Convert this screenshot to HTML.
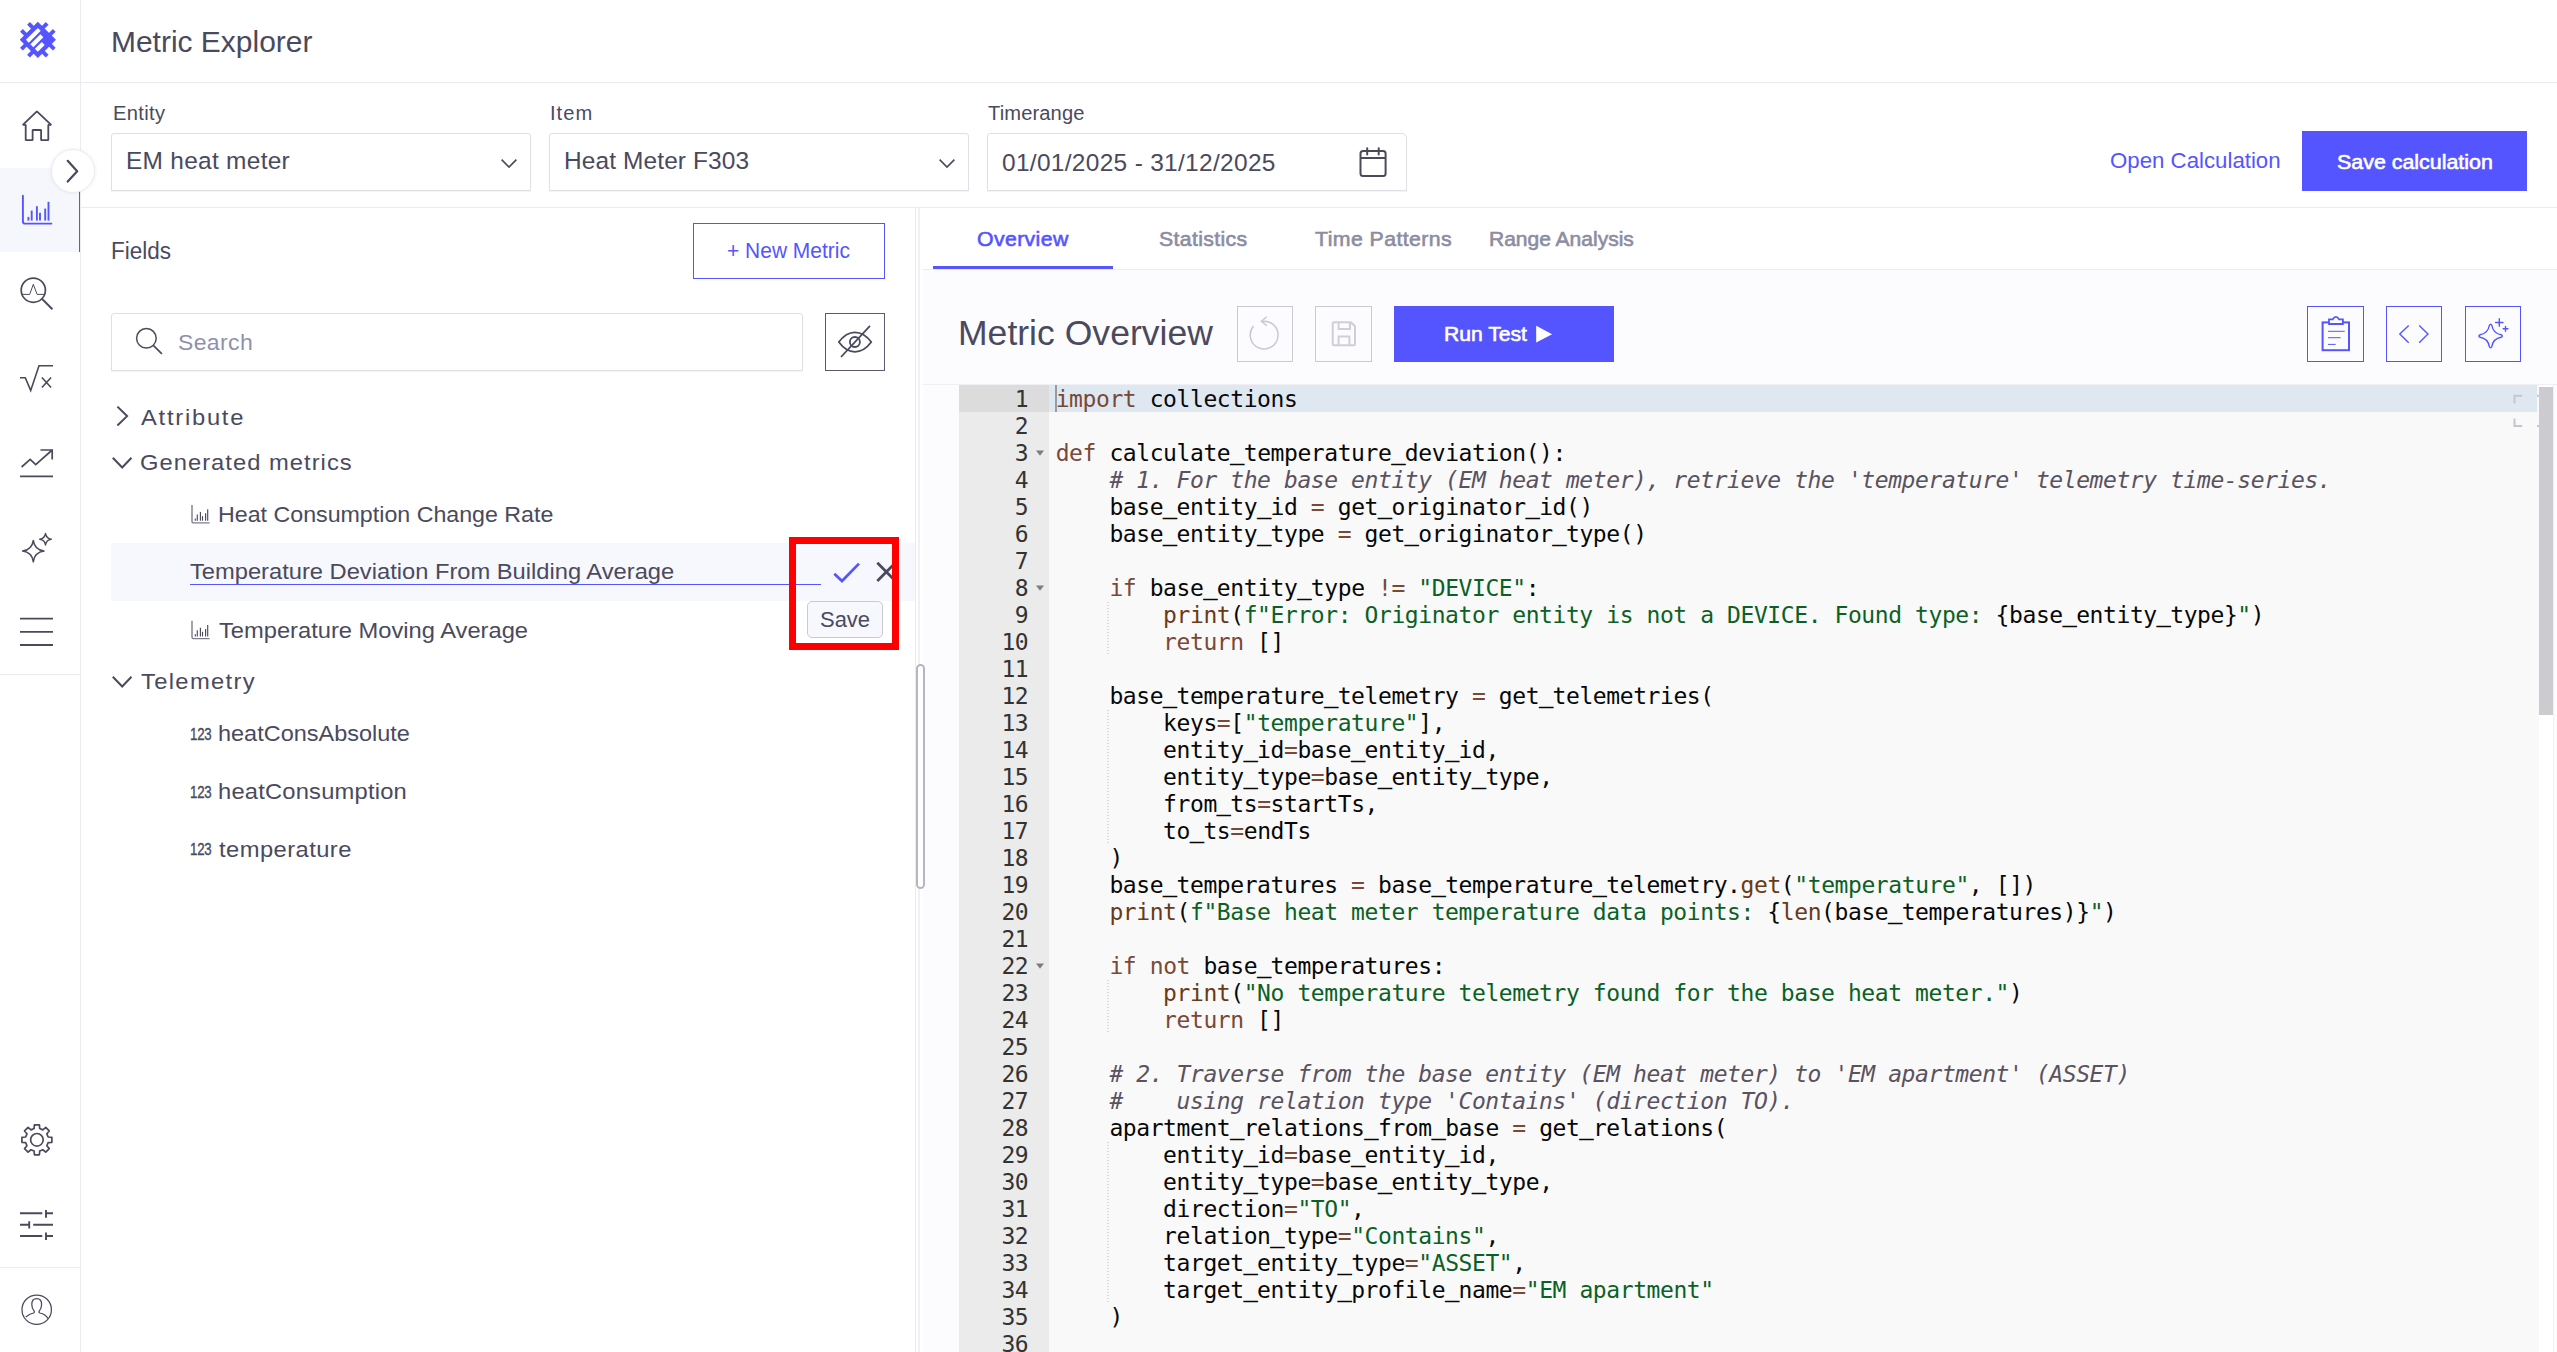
<!DOCTYPE html>
<html lang="en"><head><meta charset="utf-8"><title>Metric Explorer</title>
<style>
html,body{margin:0;padding:0;background:#fff;}
body{width:2557px;height:1352px;overflow:hidden;position:relative;font-family:"Liberation Sans",sans-serif;color:#4a4a5e;}
.t{position:absolute;white-space:nowrap;transform-origin:0 0;font-family:"Liberation Sans",sans-serif;}
.b{position:absolute;box-sizing:border-box;}
svg.ov{position:absolute;left:0;top:0;width:2557px;height:1352px;overflow:visible;}
.code{position:absolute;left:0;top:0;font-family:"DejaVu Sans Mono","Liberation Mono",monospace;font-size:23px;letter-spacing:-0.42px;white-space:pre;color:#080808;}
.ln{position:absolute;left:1055.7px;height:27px;line-height:27px;}
.gn{position:absolute;left:959px;width:69.3px;height:27px;line-height:27px;text-align:right;color:#333;}
.u{position:relative;top:-1.6px;-webkit-text-stroke:0.75px}
.k{color:#794938}.s{color:#0b6125}.c{color:#5a525f;font-style:italic}.f{color:#693a17}
</style></head><body>

<!-- structure lines -->
<div class="b" style="left:0;top:82px;width:2557px;height:1px;background:#ececf0"></div>
<div class="b" style="left:80px;top:0;width:1px;height:1352px;background:#ececf0"></div>
<div class="b" style="left:81px;top:207px;width:2476px;height:1px;background:#ececf0"></div>
<div class="b" style="left:0;top:674px;width:80px;height:1px;background:#ececf0"></div>
<div class="b" style="left:0;top:1267px;width:80px;height:1px;background:#ececf0"></div>
<!-- nav active -->
<div class="b" style="left:0;top:168px;width:79px;height:83.5px;background:#f6f6fd"></div>
<div class="b" style="left:78.6px;top:168px;width:1.5px;height:83.5px;background:#5555ff"></div>
<!-- toggle circle -->
<div class="b" style="left:50.6px;top:149.2px;width:44px;height:44px;border-radius:50%;background:#fff;border:1px solid #ececf0;box-shadow:0 0 4px rgba(0,0,0,0.07)"></div>
<!-- selects -->
<div class="b" style="left:111px;top:133px;width:420px;height:57.5px;border:1px solid #dfdfe6;border-radius:3px 3px 0 0;box-shadow:0 1px 1px rgba(0,0,0,0.05)"></div>
<div class="b" style="left:549px;top:133px;width:420px;height:57.5px;border:1px solid #dfdfe6;border-radius:3px 3px 0 0;box-shadow:0 1px 1px rgba(0,0,0,0.05)"></div>
<div class="b" style="left:987px;top:133px;width:420px;height:57.5px;border:1px solid #dfdfe6;border-radius:3px 5px 0 0;box-shadow:0 1px 1px rgba(0,0,0,0.05)"></div>
<!-- save calc -->
<div class="b" style="left:2302px;top:131px;width:225px;height:60px;background:#5555ff"></div>
<!-- new metric -->
<div class="b" style="left:693px;top:223px;width:191.5px;height:55.5px;border:1px solid #5555ff"></div>
<!-- search -->
<div class="b" style="left:111px;top:313px;width:692px;height:58px;border:1px solid #dfdfe6;border-radius:3px 3px 0 0;box-shadow:0 1px 1px rgba(0,0,0,0.05)"></div>
<div class="b" style="left:825px;top:313px;width:60px;height:58px;border:1px solid #5a5a70"></div>
<!-- selected row -->
<div class="b" style="left:111px;top:543px;width:804px;height:57.6px;background:#f7f7fe"></div>
<div class="b" style="left:190px;top:584px;width:631px;height:1px;background:#5555ff"></div>
<!-- save tooltip -->
<div class="b" style="left:807px;top:601px;width:76px;height:37px;border:1px solid #c9c9d2;border-radius:5px;background:#f7f7fe"></div>
<!-- panel dividers -->
<div class="b" style="left:915px;top:208px;width:1px;height:1144px;background:#ececf0"></div>
<div class="b" style="left:918px;top:208px;width:2px;height:1144px;background:#f1f1f5"></div>
<div class="b" style="left:915.8px;top:664px;width:9.4px;height:225px;border:2.3px solid #b6b6c3;border-radius:5px;background:#fff;z-index:3"></div>
<!-- right panel -->
<div class="b" style="left:923px;top:270px;width:1634px;height:1082px;background:#fcfcfe"></div>
<div class="b" style="left:923px;top:269px;width:1634px;height:1px;background:#ececf0"></div>
<div class="b" style="left:933px;top:266px;width:180px;height:3px;background:#5555ff"></div>
<div class="b" style="left:923px;top:384px;width:1634px;height:1px;background:#f0f0f4"></div>
<!-- buttons -->
<div class="b" style="left:1237px;top:306px;width:56px;height:56px;border:1px solid #c9c9d2"></div>
<div class="b" style="left:1315px;top:306px;width:57px;height:56px;border:1px solid #c9c9d2"></div>
<div class="b" style="left:1394px;top:306px;width:220px;height:56px;background:#5555ff"></div>
<div class="b" style="left:2307px;top:306px;width:57px;height:56px;border:1px solid #5555ff"></div>
<div class="b" style="left:2386px;top:306px;width:56px;height:56px;border:1px solid #5555ff"></div>
<div class="b" style="left:2465px;top:306px;width:56px;height:56px;border:1px solid #5555ff"></div>
<!-- editor -->
<div class="b" style="left:959px;top:385px;width:1594px;height:967px;background:#f9f9f9"></div>
<div class="b" style="left:959px;top:385px;width:90px;height:967px;background:#ebebeb"></div>
<div class="b" style="left:959px;top:385px;width:90px;height:27px;background:#dcdcdc"></div>
<div class="b" style="left:1049px;top:385px;width:1488px;height:27px;background:#dfe7f1"></div>
<div class="b" style="left:1055px;top:385px;width:2px;height:27px;background:#9a9aa2"></div>
<div class="b" style="left:2539px;top:385px;width:14px;height:967px;background:#fff"></div>
<div class="b" style="left:2539px;top:386.5px;width:14px;height:328.3px;background:#cbcbd0"></div>
<div class="b" style="left:2553px;top:385px;width:1px;height:967px;background:#f1f1f4"></div>
<!-- red box -->
<div class="b" style="left:789px;top:537px;width:110.4px;height:113px;border:7px solid #ff0000;z-index:5"></div>
<svg class="ov" viewBox="0 0 2557 1352" fill="none" stroke-linecap="butt" stroke-linejoin="miter">
<g transform="translate(37.85,39.8) rotate(-45)" fill="#5555ff" stroke="none">
<rect x="-12.8" y="-12.8" width="25.6" height="25.6"/>
<rect x="-18.2" y="3.06" width="36.4" height="3.92"/>
<rect x="3.06" y="-18.2" width="3.92" height="36.4"/>
<rect x="-18.2" y="-6.98" width="36.4" height="3.92"/>
<rect x="-6.98" y="-18.2" width="3.92" height="36.4"/>
<rect x="-8.5" y="-8.46" width="16.9" height="4.19" fill="#fff"/>
<rect x="-8.5" y="-2.06" width="14.15" height="4.19" fill="#fff"/>
<rect x="-8.5" y="4.27" width="9.75" height="4.19" fill="#fff"/>
</g>
<path d="M32.6,140.2 H25.7 V124.8 H22.8 L36.9,111.4 L51.2,124.8 H48.3 V140.2 H41.1 V130 H32.6 Z" stroke="#4a4a5c" stroke-width="1.8" stroke-linejoin="bevel"/>
<path d="M67.7,160.8 L77.2,171.2 L67.7,181.6" stroke="#4a4a5c" stroke-width="2.2" stroke-linecap="round" stroke-linejoin="round"/>
<path d="M22.9,195.7 V221.4 Q22.9,223.6 25.1,223.6 H51.4" stroke="#5555ff" stroke-width="1.9" stroke-linecap="round"/>
<path d="M28.4,216.9 V220.6" stroke="#5555ff" stroke-width="1.9"/>
<path d="M31.7,210.6 V220.6" stroke="#5555ff" stroke-width="1.9"/>
<path d="M36.9,206.2 V220.6" stroke="#5555ff" stroke-width="1.9"/>
<path d="M40.0,212.7 V220.6" stroke="#5555ff" stroke-width="1.9"/>
<path d="M45.2,208.6 V220.6" stroke="#5555ff" stroke-width="1.9"/>
<path d="M48.5,201.8 V220.6" stroke="#5555ff" stroke-width="1.9"/>
<circle cx="33.3" cy="290.2" r="12.1" stroke="#4a4a5c" stroke-width="1.7"/>
<path d="M41.8,298.6 L52.4,309.3" stroke="#4a4a5c" stroke-width="2"/>
<path d="M21.8,294.4 H29.7 L33.3,284.3 L37.1,294.4 H44.8" stroke="#4a4a5c" stroke-width="1"/>
<path d="M20,377.8 H25.3 L30.7,390.4 L39,365.8 H53" stroke="#4a4a5c" stroke-width="1.6"/>
<path d="M41.9,377.5 L51.1,387.5 M51.1,377.5 L41.9,387.5" stroke="#4a4a5c" stroke-width="1.6"/>
<path d="M21.6,467 L30.2,459.3 L35.7,464.7 L52.2,450 M40.5,450 H52.2 V459.5 M20,476.3 H53" stroke="#4a4a5c" stroke-width="1.7"/>
<path d="M33.3,540.4 Q34.583999999999996,549.816 44.0,551.1 Q34.583999999999996,552.384 33.3,561.8000000000001 Q32.016,552.384 22.599999999999998,551.1 Q32.016,549.816 33.3,540.4 Z" stroke="#4a4a5c" stroke-width="1.5" stroke-linejoin="round"/>
<path d="M45.5,533.4000000000001 Q46.196,538.504 51.3,539.2 Q46.196,539.8960000000001 45.5,545.0 Q44.804,539.8960000000001 39.7,539.2 Q44.804,538.504 45.5,533.4000000000001 Z" stroke="#4a4a5c" stroke-width="1.4" stroke-linejoin="round"/>
<path d="M20,618.7 H53 M20,631.8 H53 M20,645 H53" stroke="#4a4a5c" stroke-width="1.8"/>
<path d="M34.10,1128.54 L34.40,1124.81 L39.40,1124.81 L39.70,1128.54 L42.88,1129.86 L45.74,1127.43 L49.27,1130.96 L46.84,1133.82 L48.16,1137.00 L51.89,1137.30 L51.89,1142.30 L48.16,1142.60 L46.84,1145.78 L49.27,1148.64 L45.74,1152.17 L42.88,1149.74 L39.70,1151.06 L39.40,1154.79 L34.40,1154.79 L34.10,1151.06 L30.92,1149.74 L28.06,1152.17 L24.53,1148.64 L26.96,1145.78 L25.64,1142.60 L21.91,1142.30 L21.91,1137.30 L25.64,1137.00 L26.96,1133.82 L24.53,1130.96 L28.06,1127.43 L30.92,1129.86 Z" stroke="#4a4a5c" stroke-width="1.7" stroke-linejoin="round"/>
<circle cx="36.9" cy="1139.8" r="6.3" stroke="#4a4a5c" stroke-width="1.7"/>
<path d="M20,1213.3 H42.3 M46,1209.9 V1217.7 M46,1213.3 H53 M20,1224.7 H29.2 M29.2,1221.2 V1228.5 M33.2,1224.7 H53 M20,1236 H42.3 M46,1232.4 V1240 M46,1236 H53" stroke="#4a4a5c" stroke-width="1.9"/>
<circle cx="36.7" cy="1309.7" r="14.7" stroke="#4a4a5c" stroke-width="1.25"/>
<path d="M25.8,1317 Q30,1313.6 33.6,1313 Q35,1312.4 34,1310.8 Q31.8,1308 31.8,1304.4 Q31.8,1298.6 36.7,1298.6 Q41.6,1298.6 41.6,1304.4 Q41.6,1308 39.4,1310.8 Q38.4,1312.4 39.8,1313 Q45.6,1314.2 48,1318.6" stroke="#4a4a5c" stroke-width="1.25"/>
<path d="M501.6,159.6 L509,167 L516.4,159.6" stroke="#4a4a5c" stroke-width="1.6"/>
<path d="M939.6,159.6 L947,167 L954.4,159.6" stroke="#4a4a5c" stroke-width="1.6"/>
<rect x="1360.5" y="151.1" width="25.1" height="24.8" rx="2.5" stroke="#4a4a5c" stroke-width="2"/>
<path d="M1360.5,158 H1385.6" stroke="#4a4a5c" stroke-width="2"/>
<path d="M1367.2,148.2 V154.4 M1378.7,148.2 V154.4" stroke="#4a4a5c" stroke-width="2" stroke-linecap="round"/>
<circle cx="146.4" cy="338.3" r="9.8" stroke="#4a4a5c" stroke-width="1.5"/>
<path d="M153.5,345.6 L161.9,353.8" stroke="#4a4a5c" stroke-width="1.7"/>
<path d="M838.8,342 Q846,332.3 854.9,332.3 Q864,332.3 871.3,342 Q864,351.8 854.9,351.8 Q846,351.8 838.8,342 Z" stroke="#4a4a5c" stroke-width="1.8" stroke-linejoin="round"/>
<circle cx="854.9" cy="342" r="5" stroke="#4a4a5c" stroke-width="1.8"/>
<path d="M841,357 L870,325.8" stroke="#4a4a5c" stroke-width="1.8"/>
<path d="M117.4,406.6 L127.1,416.1 L117.4,425.5" stroke="#4a4a5c" stroke-width="2"/>
<path d="M112.8,457.7 L122.2,467.5 L131.5,457.7" stroke="#4a4a5c" stroke-width="2"/>
<path d="M112.8,676.7 L122.2,686.5 L131.5,676.7" stroke="#4a4a5c" stroke-width="2"/>
<path d="M192,505.1 V521.4 Q192,522.9 193.5,522.9 H209.6" stroke="#7c7c8e" stroke-width="1.4"/>
<path d="M195.3,518.5 V520.7" stroke="#4a4a5c" stroke-width="1.15"/>
<path d="M197.3,514.5 V520.7" stroke="#4a4a5c" stroke-width="1.15"/>
<path d="M200.4,512.1 V520.7" stroke="#4a4a5c" stroke-width="1.15"/>
<path d="M202.5,516.1 V520.7" stroke="#4a4a5c" stroke-width="1.15"/>
<path d="M205.6,513.3 V520.7" stroke="#4a4a5c" stroke-width="1.15"/>
<path d="M207.7,509.3 V520.7" stroke="#4a4a5c" stroke-width="1.15"/>
<path d="M192,620.8000000000001 V637.1 Q192,638.6 193.5,638.6 H209.6" stroke="#7c7c8e" stroke-width="1.4"/>
<path d="M195.3,634.2 V636.4000000000001" stroke="#4a4a5c" stroke-width="1.15"/>
<path d="M197.3,630.2 V636.4000000000001" stroke="#4a4a5c" stroke-width="1.15"/>
<path d="M200.4,627.8000000000001 V636.4000000000001" stroke="#4a4a5c" stroke-width="1.15"/>
<path d="M202.5,631.8000000000001 V636.4000000000001" stroke="#4a4a5c" stroke-width="1.15"/>
<path d="M205.6,629.0 V636.4000000000001" stroke="#4a4a5c" stroke-width="1.15"/>
<path d="M207.7,625.0 V636.4000000000001" stroke="#4a4a5c" stroke-width="1.15"/>
<path d="M1261.6,321.4 A13.9,13.9 0 1 1 1253.6,326" stroke="#c9c9d2" stroke-width="1.5"/>
<path d="M1266.8,316.7 L1261.4,321.3 L1266.8,325.7" stroke="#c9c9d2" stroke-width="1.5"/>
<path d="M1334,322.2 H1351 L1355,326.2 V344 Q1355,345.3 1353.7,345.3 H1334 Q1332.7,345.3 1332.7,344 V323.5 Q1332.7,322.2 1334,322.2 Z" stroke="#cfcfd8" stroke-width="2"/>
<path d="M1338.6,322.2 V329 H1350 V322.2 M1338.6,345.3 V336.6 H1349.4 V345.3" stroke="#cfcfd8" stroke-width="2"/>
<path d="M1536.2,325.8 L1552.1,334.2 L1536.2,342.6 Z" fill="#fff" stroke="none"/>
<rect x="2322.6" y="322.4" width="26.4" height="27.8" stroke="#5555ff" stroke-width="2"/>
<path d="M2329,324 V319.4 H2332.6 Q2335.9,314.4 2339.2,319.4 H2342.9 V324 Z" stroke="#5555ff" stroke-width="1.8" fill="#fcfcfe"/>
<path d="M2328,331.3 H2344.7 M2328,337.7 H2340.7 M2328,344.4 H2335.7" stroke="#5555ff" stroke-width="1"/>
<path d="M2408.7,325.5 L2399.8,333.9 L2408.7,342.7 M2419.2,325.5 L2428,333.9 L2419.2,342.7" stroke="#5555ff" stroke-width="1.4"/>
<path d="M2489.2999999999997,325.5 Q2490.6,322.9 2491.9,325.5 Q2493.196,333.404 2501.1,334.7 Q2503.7000000000003,336 2501.1,337.3 Q2493.196,338.596 2491.9,346.5 Q2490.6,349.1 2489.2999999999997,346.5 Q2488.004,338.596 2480.1,337.3 Q2477.4999999999995,336 2480.1,334.7 Q2488.004,333.404 2489.2999999999997,325.5 Z" stroke="#5555ff" stroke-width="1.4" stroke-linejoin="round"/>
<path d="M2499.3,318.8 V326.2 M2495.6,322.5 H2503 M2505.5,326.4 V331.2 M2503.1,328.8 H2507.9" stroke="#5555ff" stroke-width="1.4" stroke-linecap="round"/>
<path d="M1036,450.6 H1044 L1040,455.8 Z" fill="#7d7d7d" stroke="none"/>
<path d="M1036,585.6 H1044 L1040,590.8 Z" fill="#7d7d7d" stroke="none"/>
<path d="M1036,963.6 H1044 L1040,968.8 Z" fill="#7d7d7d" stroke="none"/>
<path d="M2514.5,403.4 V395.8 H2522.2 M2514.5,418.5 V426 H2522.2 M2537,395.8 H2539 M2537,426 H2539" stroke="#c6c6ce" stroke-width="2"/>
<path d="M834.3,573.7 L842,581 L859,563.6" stroke="#5555ff" stroke-width="2.7"/>
<path d="M877.3,562.7 L895.4,581 M877.3,581 L895.4,562.7" stroke="#4a4a5c" stroke-width="2.7"/>
</svg><span class="t" id="t_title" style="left:111.26px;top:26.00px;font-size:29.06px;line-height:32px;font-weight:400;color:#4a4a5e;letter-spacing:0.000px;transform:scaleX(1.0312);">Metric Explorer</span>
<span class="t" id="t_entity" style="left:112.73px;top:102.00px;font-size:19.38px;line-height:22px;font-weight:400;color:#4a4a5e;letter-spacing:0.340px;transform:scaleX(1.0400);">Entity</span>
<span class="t" id="t_item" style="left:550.13px;top:102.00px;font-size:19.38px;line-height:22px;font-weight:400;color:#4a4a5e;letter-spacing:0.968px;transform:scaleX(1.0400);">Item</span>
<span class="t" id="t_tr" style="left:988.29px;top:102.00px;font-size:19.38px;line-height:22px;font-weight:400;color:#4a4a5e;letter-spacing:0.113px;transform:scaleX(1.0400);">Timerange</span>
<span class="t" id="t_em" style="left:126.29px;top:148.00px;font-size:23.53px;line-height:26px;font-weight:400;color:#4a4a5e;letter-spacing:0.268px;transform:scaleX(1.0400);">EM heat meter</span>
<span class="t" id="t_hm" style="left:564.49px;top:148.00px;font-size:23.53px;line-height:26px;font-weight:400;color:#4a4a5e;letter-spacing:0.109px;transform:scaleX(1.0400);">Heat Meter F303</span>
<span class="t" id="t_date" style="left:1002.24px;top:150.00px;font-size:23.53px;line-height:26px;font-weight:400;color:#4a4a5e;letter-spacing:0.300px;transform:scaleX(1.0400);">01/01/2025 - 31/12/2025</span>
<span class="t" id="t_open" style="left:2109.86px;top:147.00px;font-size:22.84px;line-height:26px;font-weight:400;color:#5555ff;letter-spacing:0.000px;transform:scaleX(0.9742);">Open Calculation</span>
<span class="t" id="t_savec" style="left:2336.83px;top:150.00px;font-size:20.66px;line-height:23px;font-weight:400;color:#fff;letter-spacing:0.000px;transform:scaleX(1.0360);-webkit-text-stroke:0.6px;">Save calculation</span>
<span class="t" id="t_fields" style="left:111.24px;top:238.00px;font-size:23.15px;line-height:26px;font-weight:400;color:#4a4a5e;letter-spacing:0.000px;transform:scaleX(0.9726);">Fields</span>
<span class="t" id="t_newm" style="left:726.72px;top:239.00px;font-size:21.49px;line-height:24px;font-weight:400;color:#5555ff;letter-spacing:0.000px;transform:scaleX(0.9764);">+ New Metric</span>
<span class="t" id="t_search" style="left:177.68px;top:330.00px;font-size:22.11px;line-height:25px;font-weight:400;color:#9090ae;letter-spacing:0.356px;transform:scaleX(1.0400);">Search</span>
<span class="t" id="t_attr" style="left:141.40px;top:404.00px;font-size:22.84px;line-height:26px;font-weight:400;color:#4a4a5e;letter-spacing:1.683px;transform:scaleX(1.0400);">Attribute</span>
<span class="t" id="t_gen" style="left:140.49px;top:449.00px;font-size:22.84px;line-height:26px;font-weight:400;color:#4a4a5e;letter-spacing:0.984px;transform:scaleX(1.0400);">Generated metrics</span>
<span class="t" id="t_hccr" style="left:218.09px;top:501.00px;font-size:22.84px;line-height:26px;font-weight:400;color:#4a4a5e;letter-spacing:0.000px;transform:scaleX(1.0165);">Heat Consumption Change Rate</span>
<span class="t" id="t_tdfb" style="left:189.83px;top:558.00px;font-size:22.84px;line-height:26px;font-weight:400;color:#4a4a5e;letter-spacing:0.000px;transform:scaleX(1.0378);">Temperature Deviation From Building Average</span>
<span class="t" id="t_tma" style="left:218.93px;top:617.00px;font-size:22.84px;line-height:26px;font-weight:400;color:#4a4a5e;letter-spacing:0.000px;transform:scaleX(1.0376);">Temperature Moving Average</span>
<span class="t" id="t_tel" style="left:140.83px;top:668.00px;font-size:22.84px;line-height:26px;font-weight:400;color:#4a4a5e;letter-spacing:1.287px;transform:scaleX(1.0400);">Telemetry</span>
<span class="t" id="t_hca" style="left:218.43px;top:720.00px;font-size:22.84px;line-height:26px;font-weight:400;color:#4a4a5e;letter-spacing:-0.000px;transform:scaleX(1.0287);">heatConsAbsolute</span>
<span class="t" id="t_hc" style="left:218.42px;top:778.00px;font-size:22.84px;line-height:26px;font-weight:400;color:#4a4a5e;letter-spacing:0.187px;transform:scaleX(1.0400);">heatConsumption</span>
<span class="t" id="t_temp" style="left:218.90px;top:836.00px;font-size:22.84px;line-height:26px;font-weight:400;color:#4a4a5e;letter-spacing:0.422px;transform:scaleX(1.0400);">temperature</span>
<span class="t" id="t_save" style="left:820.21px;top:607.00px;font-size:22.32px;line-height:25px;font-weight:400;color:#4a4a5e;letter-spacing:0.000px;transform:scaleX(0.9843);">Save</span>
<span class="t" id="t_ov" style="left:977.00px;top:227.00px;font-size:20.45px;line-height:23px;font-weight:400;color:#5555ff;letter-spacing:0.371px;transform:scaleX(1.0400);-webkit-text-stroke:0.6px;">Overview</span>
<span class="t" id="t_st" style="left:1158.84px;top:227.00px;font-size:20.45px;line-height:23px;font-weight:400;color:#8c8ca2;letter-spacing:0.335px;transform:scaleX(1.0400);-webkit-text-stroke:0.6px;">Statistics</span>
<span class="t" id="t_tp" style="left:1314.67px;top:227.00px;font-size:20.45px;line-height:23px;font-weight:400;color:#8c8ca2;letter-spacing:0.418px;transform:scaleX(1.0400);-webkit-text-stroke:0.6px;">Time Patterns</span>
<span class="t" id="t_ra" style="left:1489.36px;top:227.00px;font-size:20.45px;line-height:23px;font-weight:400;color:#8c8ca2;letter-spacing:0.000px;transform:scaleX(1.0282);-webkit-text-stroke:0.6px;">Range Analysis</span>
<span class="t" id="t_mo" style="left:957.53px;top:314.00px;font-size:34.15px;line-height:38px;font-weight:400;color:#4a4a5e;letter-spacing:0.026px;transform:scaleX(1.0400);">Metric Overview</span>
<span class="t" id="t_run" style="left:1443.75px;top:322.00px;font-size:20.66px;line-height:23px;font-weight:400;color:#fff;letter-spacing:0.000px;transform:scaleX(1.0227);-webkit-text-stroke:0.6px;">Run Test</span><div class="code">
<div class="gn" style="top:386px">1</div><div class="ln" style="top:386px"><span class="k">import</span> collections</div>
<div class="gn" style="top:413px">2</div><div class="ln" style="top:413px"></div>
<div class="gn" style="top:440px">3</div><div class="ln" style="top:440px"><span class="k">def</span> calculate<span class="u">_</span>temperature<span class="u">_</span>deviation():</div>
<div class="gn" style="top:467px">4</div><div class="ln" style="top:467px">    <span class="c"># 1. For the base entity (EM heat meter), retrieve the 'temperature' telemetry time-series.</span></div>
<div class="gn" style="top:494px">5</div><div class="ln" style="top:494px">    base<span class="u">_</span>entity<span class="u">_</span>id <span class="k">=</span> get<span class="u">_</span>originator<span class="u">_</span>id()</div>
<div class="gn" style="top:521px">6</div><div class="ln" style="top:521px">    base<span class="u">_</span>entity<span class="u">_</span>type <span class="k">=</span> get<span class="u">_</span>originator<span class="u">_</span>type()</div>
<div class="gn" style="top:548px">7</div><div class="ln" style="top:548px"></div>
<div class="gn" style="top:575px">8</div><div class="ln" style="top:575px">    <span class="k">if</span> base<span class="u">_</span>entity<span class="u">_</span>type <span class="k">!=</span> <span class="s">&quot;DEVICE&quot;</span>:</div>
<div class="gn" style="top:602px">9</div><div class="ln" style="top:602px">        <span class="f">print</span>(<span class="s">f&quot;Error: Originator entity is not a DEVICE. Found type: </span>{base<span class="u">_</span>entity<span class="u">_</span>type}<span class="s">&quot;</span>)</div>
<div class="gn" style="top:629px">10</div><div class="ln" style="top:629px">        <span class="k">return</span> []</div>
<div class="gn" style="top:656px">11</div><div class="ln" style="top:656px"></div>
<div class="gn" style="top:683px">12</div><div class="ln" style="top:683px">    base<span class="u">_</span>temperature<span class="u">_</span>telemetry <span class="k">=</span> get<span class="u">_</span>telemetries(</div>
<div class="gn" style="top:710px">13</div><div class="ln" style="top:710px">        keys<span class="k">=</span>[<span class="s">&quot;temperature&quot;</span>],</div>
<div class="gn" style="top:737px">14</div><div class="ln" style="top:737px">        entity<span class="u">_</span>id<span class="k">=</span>base<span class="u">_</span>entity<span class="u">_</span>id,</div>
<div class="gn" style="top:764px">15</div><div class="ln" style="top:764px">        entity<span class="u">_</span>type<span class="k">=</span>base<span class="u">_</span>entity<span class="u">_</span>type,</div>
<div class="gn" style="top:791px">16</div><div class="ln" style="top:791px">        from<span class="u">_</span>ts<span class="k">=</span>startTs,</div>
<div class="gn" style="top:818px">17</div><div class="ln" style="top:818px">        to<span class="u">_</span>ts<span class="k">=</span>endTs</div>
<div class="gn" style="top:845px">18</div><div class="ln" style="top:845px">    )</div>
<div class="gn" style="top:872px">19</div><div class="ln" style="top:872px">    base<span class="u">_</span>temperatures <span class="k">=</span> base<span class="u">_</span>temperature<span class="u">_</span>telemetry.<span class="f">get</span>(<span class="s">&quot;temperature&quot;</span>, [])</div>
<div class="gn" style="top:899px">20</div><div class="ln" style="top:899px">    <span class="f">print</span>(<span class="s">f&quot;Base heat meter temperature data points: </span>{<span class="f">len</span>(base<span class="u">_</span>temperatures)}<span class="s">&quot;</span>)</div>
<div class="gn" style="top:926px">21</div><div class="ln" style="top:926px"></div>
<div class="gn" style="top:953px">22</div><div class="ln" style="top:953px">    <span class="k">if</span> <span class="k">not</span> base<span class="u">_</span>temperatures:</div>
<div class="gn" style="top:980px">23</div><div class="ln" style="top:980px">        <span class="f">print</span>(<span class="s">&quot;No temperature telemetry found for the base heat meter.&quot;</span>)</div>
<div class="gn" style="top:1007px">24</div><div class="ln" style="top:1007px">        <span class="k">return</span> []</div>
<div class="gn" style="top:1034px">25</div><div class="ln" style="top:1034px"></div>
<div class="gn" style="top:1061px">26</div><div class="ln" style="top:1061px">    <span class="c"># 2. Traverse from the base entity (EM heat meter) to 'EM apartment' (ASSET)</span></div>
<div class="gn" style="top:1088px">27</div><div class="ln" style="top:1088px">    <span class="c">#    using relation type 'Contains' (direction TO).</span></div>
<div class="gn" style="top:1115px">28</div><div class="ln" style="top:1115px">    apartment<span class="u">_</span>relations<span class="u">_</span>from<span class="u">_</span>base <span class="k">=</span> get<span class="u">_</span>relations(</div>
<div class="gn" style="top:1142px">29</div><div class="ln" style="top:1142px">        entity<span class="u">_</span>id<span class="k">=</span>base<span class="u">_</span>entity<span class="u">_</span>id,</div>
<div class="gn" style="top:1169px">30</div><div class="ln" style="top:1169px">        entity<span class="u">_</span>type<span class="k">=</span>base<span class="u">_</span>entity<span class="u">_</span>type,</div>
<div class="gn" style="top:1196px">31</div><div class="ln" style="top:1196px">        direction<span class="k">=</span><span class="s">&quot;TO&quot;</span>,</div>
<div class="gn" style="top:1223px">32</div><div class="ln" style="top:1223px">        relation<span class="u">_</span>type<span class="k">=</span><span class="s">&quot;Contains&quot;</span>,</div>
<div class="gn" style="top:1250px">33</div><div class="ln" style="top:1250px">        target<span class="u">_</span>entity<span class="u">_</span>type<span class="k">=</span><span class="s">&quot;ASSET&quot;</span>,</div>
<div class="gn" style="top:1277px">34</div><div class="ln" style="top:1277px">        target<span class="u">_</span>entity<span class="u">_</span>profile<span class="u">_</span>name<span class="k">=</span><span class="s">&quot;EM apartment&quot;</span></div>
<div class="gn" style="top:1304px">35</div><div class="ln" style="top:1304px">    )</div>
<div class="gn" style="top:1331px">36</div><div class="ln" style="top:1331px"></div>
</div>
<div class="b" style="left:1107.3px;top:602px;width:1.5px;height:54px;background:repeating-linear-gradient(to bottom,#dcdacd 0,#dcdacd 1.4px,transparent 1.4px,transparent 3px)"></div>
<div class="b" style="left:1107.3px;top:710px;width:1.5px;height:135px;background:repeating-linear-gradient(to bottom,#dcdacd 0,#dcdacd 1.4px,transparent 1.4px,transparent 3px)"></div>
<div class="b" style="left:1107.3px;top:980px;width:1.5px;height:54px;background:repeating-linear-gradient(to bottom,#dcdacd 0,#dcdacd 1.4px,transparent 1.4px,transparent 3px)"></div>
<div class="b" style="left:1107.3px;top:1142px;width:1.5px;height:162px;background:repeating-linear-gradient(to bottom,#dcdacd 0,#dcdacd 1.4px,transparent 1.4px,transparent 3px)"></div>
<span class="t" style="left:189.8px;top:725.6px;font-size:17px;line-height:17px;font-weight:400;color:#4a4a5e;transform:scaleX(0.78);transform-origin:0 0;letter-spacing:-0.3px;-webkit-text-stroke:0.35px">123</span>
<span class="t" style="left:189.8px;top:783.6px;font-size:17px;line-height:17px;font-weight:400;color:#4a4a5e;transform:scaleX(0.78);transform-origin:0 0;letter-spacing:-0.3px;-webkit-text-stroke:0.35px">123</span>
<span class="t" style="left:189.8px;top:841.4px;font-size:17px;line-height:17px;font-weight:400;color:#4a4a5e;transform:scaleX(0.78);transform-origin:0 0;letter-spacing:-0.3px;-webkit-text-stroke:0.35px">123</span>
</body></html>
